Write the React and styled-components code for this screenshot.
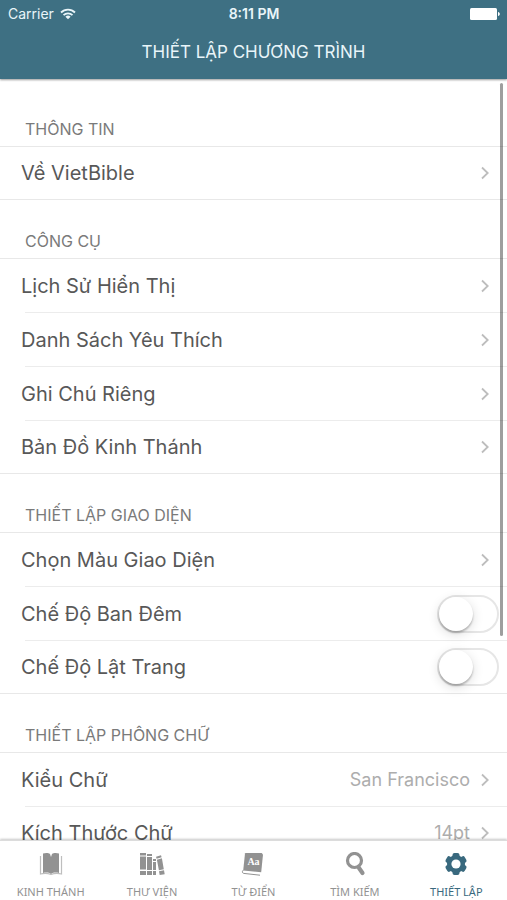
import React from "react";
import styled, { createGlobalStyle } from "styled-components";

const GlobalStyle = createGlobalStyle`
  *, *::before, *::after { box-sizing: border-box; }
  body { margin: 0; background: #fff; }
`;

const Screen = styled.div`
  display: flex;
  flex-direction: column;
  height: 100vh;
  overflow: hidden;
  background: #fff;
  color: #585858;
  font-family: Inter, "Liberation Sans", sans-serif;
`;

const Header = styled.header`
  position: relative;
  z-index: 1;
  flex: none;
  background: #3e7083;
  color: #e9f5f9;
  box-shadow: 0 1px 2px rgba(0, 0, 0, 0.4);
`;

const StatusBar = styled.div`
  display: grid;
  grid-template-columns: 1fr auto 1fr;
  align-items: center;
  height: 28px;
  padding: 0 7px 0 8px;
  font-size: 14px;
  line-height: 16px;
`;

const Carrier = styled.div`
  display: flex;
  align-items: center;
  gap: 6px;
`;

const Clock = styled.time`
  font-weight: 600;
`;

const BatterySlot = styled.div`
  display: flex;
  justify-content: flex-end;
`;

const Title = styled.h1`
  margin: 0;
  height: 51px;
  padding-top: 12px;
  text-align: center;
  font-size: 17px;
  line-height: 24px;
  font-weight: 400;
`;

const Body = styled.div`
  position: relative;
  flex: 1;
  min-height: 0;
`;

const Content = styled.main`
  height: 100%;
  padding-top: 9px;
  overflow-y: auto;
  scrollbar-width: none;
`;

const ScrollThumb = styled.div`
  position: absolute;
  top: 4px;
  right: 4px;
  width: 3px;
  height: calc(73% - 3px);
  border-radius: 2px;
  background: rgba(0, 0, 0, 0.38);
`;

const Heading = styled.h2`
  display: flex;
  align-items: flex-end;
  margin: 0;
  height: 58px;
  padding: 0 25px 7px;
  color: #7a7a7a;
  font-size: 16px;
  line-height: 20px;
  font-weight: 400;
`;

const List = styled.ul`
  margin: 0;
  padding: 0;
  list-style: none;
  border: solid #e8e8e8;
  border-width: 1px 0;
`;

const Item = styled.li`
  height: 54px;
  background: linear-gradient(#ececec, #ececec) 25px 100% / 100% 1px no-repeat;

  &:last-child {
    height: 52px;
    background: none;
  }
`;

const rowLayout = `
  display: flex;
  align-items: center;
  width: 100%;
  height: 100%;
  font-size: 20px;
  line-height: 28px;
`;

const RowLink = styled.a`
  ${rowLayout}
  padding: 0 18px 0 21px;
  color: inherit;
  text-decoration: none;
`;

const RowLabel = styled.label`
  ${rowLayout}
  padding: 0 8px 0 21px;
`;

const RowText = styled.span`
  flex: 1;
`;

const RowValue = styled.span`
  margin-right: 11px;
  color: #adadad;
  font-size: 18px;
`;

const Switch = styled.input`
  appearance: none;
  display: flex;
  align-items: center;
  flex: none;
  margin: 0;
  width: 62px;
  height: 38px;
  border: 2px solid #e6e6e6;
  border-radius: 19px;
  background: #fff;

  &::before {
    content: "";
    width: 34px;
    height: 34px;
    border-radius: 50%;
    background: #fff;
    box-shadow: 0 2px 2px rgba(0, 0, 0, 0.24), 0 3px 12px rgba(0, 0, 0, 0.14);
  }

  &:checked {
    justify-content: flex-end;
    background: #3e7083;
  }
`;

const TabBar = styled.nav`
  position: relative;
  display: grid;
  grid-template-columns: repeat(5, 1fr);
  flex: none;
  height: 60px;
  background: #fff;
  border-top: 1px solid #dcdcdc;
  box-shadow: 0 -1px 2px rgba(0, 0, 0, 0.22);
`;

const Tab = styled.a`
  display: flex;
  flex-direction: column;
  align-items: center;
  gap: 8px;
  padding-top: 11px;
  color: ${(p) => (p.$active ? "#39697e" : "#929292")};
  font-family: "Noto Sans", "Open Sans", sans-serif;
  font-size: 11px;
  line-height: 16px;
  text-decoration: none;
  white-space: nowrap;
`;

const Wifi = () => (
  <svg width="16" height="12" viewBox="0 0 16 12" fill="none" stroke="currentColor" strokeWidth="1.8">
    <path d="M1 4.5a10 10 0 0 1 14 0M3.5 7.2a6.4 6.4 0 0 1 9 0" />
    <path d="M8 11.2 5.4 8.7a3.7 3.7 0 0 1 5.2 0z" fill="currentColor" stroke="none" />
  </svg>
);

const Battery = () => (
  <svg width="30" height="12" viewBox="0 0 30 12" fill="#fff">
    <rect width="27" height="12" rx="1.5" />
    <path d="M28 4c2.4.6 2.4 3.4 0 4z" />
  </svg>
);

const Chevron = () => (
  <svg width="8" height="14" viewBox="0 0 8 14" fill="none" stroke="#bdbdbd" strokeWidth="1.8">
    <path d="m1 1.500 5.700 5.500L1 12.500" />
  </svg>
);

const BookIcon = () => (
  <svg width="24" height="24" viewBox="0 0 24 24" fill="currentColor">
    <path d="M4 1.500c2.500-.9 5.500-.8 7 .5l1 3 1-3c1.500-1.300 4.500-1.400 7-.5v19.500c-3-.8-6-.5-8 1-2-1.500-5-1.800-8-1z" />
    <path d="M1.500 4v18c3.500-.8 7-.8 10.500.5 3.500-1.300 7-1.300 10.500-.5V4" fill="none" stroke="currentColor" strokeWidth="1.2" opacity=".6" />
  </svg>
);

const LibraryIcon = () => (
  <svg width="26" height="24" viewBox="0 0 26 24" fill="currentColor">
    <path d="M1 1h6v2.500H1zM1 4.500h6v13H1zM1 19h6v4H1zM8 2h5v2H8zM8 5h5v13H8zM8 19h5v4H8zM14 10h3v8h-3zM14 7h3v2h-3zM14 19h3v4h-3z" />
    <path d="m17 4.800 5-1.500.6 2-5 1.500zM17.900 7.700l5-1.500 1.900 11-4.900 1zM20 19.200l5-1 .7 4-5 .8z" />
  </svg>
);

const DictionaryIcon = () => (
  <svg width="24" height="24" viewBox="0 0 24 24">
    <path d="M4.500 1h16.200l1.300 1.500-1.800 17.700-18-1.700L4 1.500z" fill="currentColor" />
    <path d="M2.200 18.200c-1.500 1.500-.7 3 .5 3.200l16.300 1.800" fill="none" stroke="currentColor" strokeWidth="1" />
    <text x="12.500" y="13" fill="#fff" fontFamily="Liberation Serif" fontWeight="700" fontSize="10" textAnchor="middle">Aa</text>
  </svg>
);

const SearchIcon = () => (
  <svg width="24" height="24" viewBox="0 0 24 24" fill="none" stroke="currentColor">
    <circle cx="11.500" cy="8.500" r="7" strokeWidth="3.200" />
    <path d="m16 16 3.500 5" strokeWidth="4.200" strokeLinecap="round" />
  </svg>
);

const GearIcon = () => (
  <svg width="24" height="24" viewBox="0 0 24 24">
    <g fill="currentColor">
      <circle cx="12" cy="12" r="9" />
      {[0, 60, 120].map((a) => (
        <rect key={a} x="8.500" y="1" width="7" height="22" rx="2" transform={`rotate(${a} 12 12)`} />
      ))}
    </g>
    <circle cx="12" cy="12" r="4.600" fill="#fff" />
  </svg>
);

const sections = [
  { title: "THÔNG TIN", rows: [{ text: "Về VietBible" }] },
  {
    title: "CÔNG CỤ",
    rows: [
      { text: "Lịch Sử Hiển Thị" },
      { text: "Danh Sách Yêu Thích" },
      { text: "Ghi Chú Riêng" },
      { text: "Bản Đồ Kinh Thánh" },
    ],
  },
  {
    title: "THIẾT LẬP GIAO DIỆN",
    rows: [
      { text: "Chọn Màu Giao Diện" },
      { text: "Chế Độ Ban Đêm", id: "night" },
      { text: "Chế Độ Lật Trang", id: "flip" },
    ],
  },
  {
    title: "THIẾT LẬP PHÔNG CHỮ",
    rows: [
      { text: "Kiểu Chữ", value: "San Francisco" },
      { text: "Kích Thước Chữ", value: "14pt" },
    ],
  },
];

const tabs = [
  { label: "KINH THÁNH", Icon: BookIcon },
  { label: "THƯ VIỆN", Icon: LibraryIcon },
  { label: "TỪ ĐIỂN", Icon: DictionaryIcon },
  { label: "TÌM KIẾM", Icon: SearchIcon },
  { label: "THIẾT LẬP", Icon: GearIcon, active: true },
];

function Row({ text, value, id }) {
  if (id) {
    return (
      <Item>
        <RowLabel htmlFor={id}>
          <RowText>{text}</RowText>
          <Switch id={id} type="checkbox" role="switch" />
        </RowLabel>
      </Item>
    );
  }
  return (
    <Item>
      <RowLink href="#">
        <RowText>{text}</RowText>
        {value && <RowValue>{value}</RowValue>}
        <Chevron />
      </RowLink>
    </Item>
  );
}

export default function App() {
  return (
    <Screen lang="vi">
      <GlobalStyle />
      <Header>
        <StatusBar>
          <Carrier>Carrier <Wifi /></Carrier>
          <Clock>8:11 PM</Clock>
          <BatterySlot><Battery /></BatterySlot>
        </StatusBar>
        <Title>THIẾT LẬP CHƯƠNG TRÌNH</Title>
      </Header>
      <Body>
        <Content>
          {sections.map((s) => (
            <section key={s.title}>
              <Heading>{s.title}</Heading>
              <List>
                {s.rows.map((r) => <Row key={r.text} {...r} />)}
              </List>
            </section>
          ))}
        </Content>
        <ScrollThumb />
      </Body>
      <TabBar>
        {tabs.map(({ label, Icon, active }) => (
          <Tab key={label} href="#" $active={active} aria-current={active ? "page" : undefined}>
            <Icon />
            {label}
          </Tab>
        ))}
      </TabBar>
    </Screen>
  );
}
